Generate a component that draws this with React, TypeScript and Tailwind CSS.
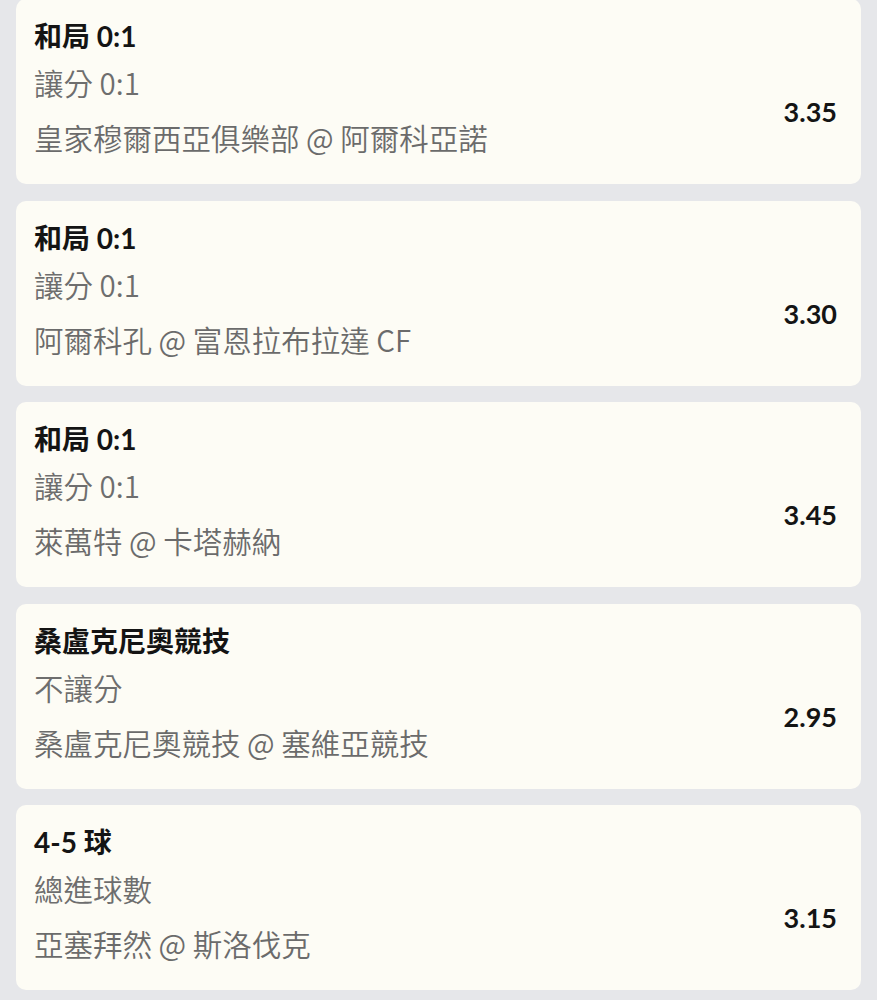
const BETS = [
  { title: '和局 0:1', market: '讓分 0:1', match: '皇家穆爾西亞俱樂部 @ 阿爾科亞諾', odds: '3.35' },
  { title: '和局 0:1', market: '讓分 0:1', match: '阿爾科孔 @ 富恩拉布拉達 CF', odds: '3.30' },
  { title: '和局 0:1', market: '讓分 0:1', match: '萊萬特 @ 卡塔赫納', odds: '3.45' },
  { title: '桑盧克尼奧競技', market: '不讓分', match: '桑盧克尼奧競技 @ 塞維亞競技', odds: '2.95' },
  { title: '4-5 球', market: '總進球數', match: '亞塞拜然 @ 斯洛伐克', odds: '3.15' },
];

const font = { fontFamily: 'Lato, "Noto Sans CJK TC", sans-serif' };
const thin = { fontFamily: '"Noto Sans CJK TC", sans-serif' };

export default function App() {
  return (
    <div className="min-h-[1000px] w-[877px] bg-[#e6e7ea] overflow-hidden" style={font}>
      <div className="flex flex-col gap-[16.5px] px-4 -mt-px">
        {BETS.map((bet, i) => (
          <div key={i} className="h-[185px] rounded-[10px] bg-[#fdfcf5] flex justify-between pl-[18px] pr-[24px] pt-[17px]">
            <div className="flex flex-col">
              {/* selection */}
              <div className="text-[28px] leading-[40px] font-bold text-[#141414]">{bet.title}</div>
              <div className="mt-[2px] text-[29.5px] leading-[48px] font-[350] text-[#6e6e6e]" style={thin}>{bet.market}</div>
              <div className="mt-[7px] text-[29.5px] leading-[48px] font-[350] text-[#6b6b6b]" style={thin}>{bet.match}</div>
            </div>
            <div className="pt-[76px] text-[27px] leading-[40px] font-bold text-[#141414]">{bet.odds}</div>
          </div>
        ))}
      </div>
    </div>
  );
}
